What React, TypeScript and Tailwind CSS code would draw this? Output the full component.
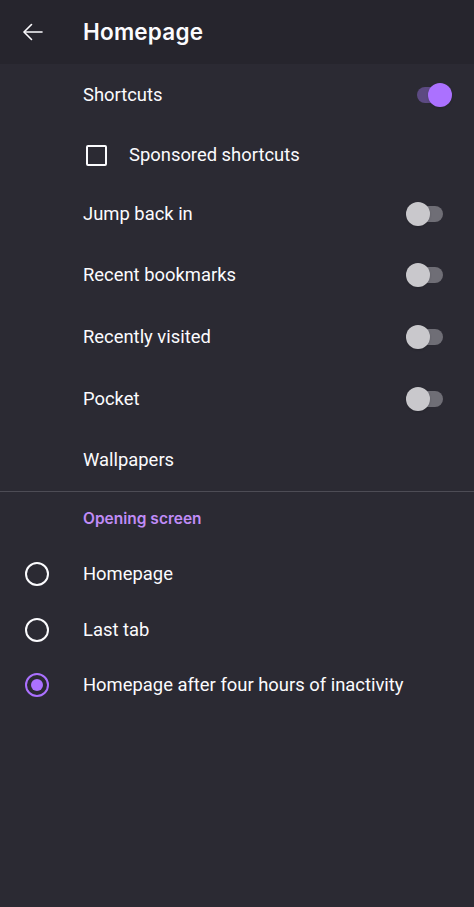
function Toggle({ on }: { on: boolean }) {
  return (
    <div className="relative w-[38px] h-[24px] flex items-center">
      <div className={`ml-[5px] w-[32px] h-[16px] rounded-full ${on ? "bg-[#5c4a82]" : "bg-[#6f6e76]"}`} />
      <div
        className={`absolute top-0 w-[24px] h-[24px] rounded-full shadow ${on ? "left-[16px] bg-[#ab71ff]" : "left-0 bg-[#c9c8cc]"}`}
      />
    </div>
  );
}

function Radio({ selected }: { selected: boolean }) {
  return (
    <div
      className={`w-[24px] h-[24px] rounded-full border-[2.5px] flex items-center justify-center ${selected ? "border-[#ab71ff]" : "border-[#fbfbfe]"}`}
    >
      {selected && <div className="w-[12px] h-[12px] rounded-full bg-[#ab71ff]" />}
    </div>
  );
}

export default function App() {
  const toggles = [
    { label: "Jump back in", h: "h-[60px]" },
    { label: "Recent bookmarks", h: "h-[62px]" },
    { label: "Recently visited", h: "h-[62px]" },
    { label: "Pocket", h: "h-[61px]" },
  ];

  const radios = [
    { label: "Homepage", selected: false, h: "h-[56px]" },
    { label: "Last tab", selected: false, h: "h-[55px]" },
    { label: "Homepage after four hours of inactivity", selected: true, h: "h-[56px]" },
  ];

  return (
    <div className="w-[474px] h-[907px] bg-[#2b2a33] text-[#fbfbfe] font-['Roboto',sans-serif] overflow-hidden">
      {/* Top bar */}
      <div className="h-16 bg-[#26252d] flex items-center">
        <div className="w-[83px] pl-[21px]">
          <svg width="24" height="24" viewBox="0 0 24 24" fill="none" stroke="#fbfbfe" strokeWidth="1.6" strokeLinecap="round" strokeLinejoin="round">
            <path d="M21 12H3.5" />
            <path d="M10.5 4.5L3 12l7.5 7.5" />
          </svg>
        </div>
        <h1 className="text-[22.5px] font-semibold tracking-[0.2px] font-['Inter',sans-serif]">Homepage</h1>
      </div>

      {/* Shortcuts */}
      <div className="h-[62px] flex items-center justify-between pl-[83px] pr-[24px]">
        <span className="text-[18.4px]">Shortcuts</span>
        <Toggle on />
      </div>
      <div className="h-[58px] flex items-center pl-[86px]">
        <div className="w-[21px] h-[21px] border-2 border-[#fbfbfe] rounded-[2px]" />
        <span className="ml-[22px] text-[18.4px]">Sponsored shortcuts</span>
      </div>

      {toggles.map((t) => (
        <div key={t.label} className={`${t.h} flex items-center justify-between pl-[83px] pr-[30px]`}>
          <span className="text-[18.4px]">{t.label}</span>
          <Toggle on={false} />
        </div>
      ))}

      <div className="h-[62px] flex items-center pl-[83px]">
        <span className="text-[18.4px]">Wallpapers</span>
      </div>

      <div className="h-px bg-[#4d4c55]" />

      {/* Opening screen */}
      <div className="h-[54px] flex items-center pl-[83px]">
        <span className="text-[15.5px] font-semibold text-[#c08cf7] font-['Inter',sans-serif]">Opening screen</span>
      </div>

      {radios.map((r) => (
        <div key={r.label} className={`${r.h} flex items-center`}>
          <div className="w-[83px] pl-[25px]">
            <Radio selected={r.selected} />
          </div>
          <span className="text-[18.4px]">{r.label}</span>
        </div>
      ))}
    </div>
  );
}
